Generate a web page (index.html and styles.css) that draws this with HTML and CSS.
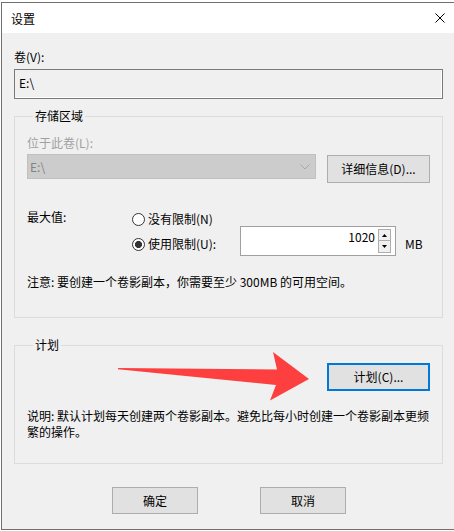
FILE: index.html
```html
<!DOCTYPE html>
<html lang="zh-CN">
<head>
<meta charset="utf-8">
<title>设置</title>
<link rel="stylesheet" href="styles.css">
</head>
<body>
<div class="window">
  <div class="titlebar">
    <span class="title">设置</span>
    <svg class="close" width="10" height="10" viewBox="0 0 10 10"><path d="M0.5 0.5 L9.5 9.5 M9.5 0.5 L0.5 9.5" stroke="#000" stroke-width="1" fill="none"/></svg>
  </div>
  <div class="content">
    <div class="label vol-label">卷(V):</div>
    <div class="textbox">E:\</div>

    <fieldset class="group storage">
      <legend>存储区域</legend>
      <div class="label disabled">位于此卷(L):</div>
      <div class="loc-row">
        <div class="combo">
          <span>E:\</span>
          <svg class="chevron" width="10" height="6" viewBox="0 0 10 6"><path d="M0.5 0.5 L5 5 L9.5 0.5" stroke="#a8a8a8" stroke-width="1" fill="none"/></svg>
        </div>
        <button class="btn details">详细信息(D)...</button>
      </div>
      <div class="limits">
        <div class="label max-label">最大值:</div>
        <div class="radio r1"><span class="circle"></span>没有限制(N)</div>
        <div class="radio r2"><span class="circle checked"></span>使用限制(U):</div>
        <div class="spin">
          <span class="spin-value">1020</span>
          <div class="spin-btns">
            <span class="spin-btn"><svg width="5" height="3" viewBox="0 0 5 3"><path d="M2.5 0 L5 3 L0 3 Z" fill="#000"/></svg></span>
            <span class="spin-btn"><svg width="5" height="3" viewBox="0 0 5 3"><path d="M0 0 L5 0 L2.5 3 Z" fill="#000"/></svg></span>
          </div>
        </div>
        <div class="label unit">MB</div>
      </div>
      <div class="label note">注意: 要创建一个卷影副本，你需要至少 300MB 的可用空间。</div>
    </fieldset>

    <fieldset class="group schedule">
      <legend>计划</legend>
      <div class="sched-row">
        <button class="btn focused">计划(C)...</button>
      </div>
      <div class="label desc">说明: 默认计划每天创建两个卷影副本。避免比每小时创建一个卷影副本更频<br>繁的操作。</div>
    </fieldset>

    <div class="actions">
      <button class="btn action">确定</button>
      <button class="btn action">取消</button>
    </div>

    <svg class="arrow" width="200" height="52" viewBox="116 350 200 52">
      <polygon points="118,368 277,369.5 273,352 309,379 270,400.5 276,385 118,369.2" fill="#fd3f3f"/>
    </svg>
  </div>
</div>
</body>
</html>
```

FILE: styles.css
```css
* {
  box-sizing: border-box;
}

html, body {
  margin: 0;
  padding: 0;
}

body {
  width: 454px;
  height: 531px;
  overflow: hidden;
  background: #ffffff;
  font-family: "Noto Sans CJK SC", "Noto Sans", sans-serif;
  font-size: 12px;
  line-height: 16px;
  color: #000;
}

.window {
  margin: 2px 0 0 1px;
  width: 453px;
  height: 528px;
  border: 1px solid #707070;
  border-right: none;
  display: flex;
  flex-direction: column;
  background: #f0f0f0;
}

.titlebar {
  height: 30px;
  flex: none;
  background: #ffffff;
  display: flex;
  align-items: center;
  justify-content: space-between;
  padding: 0 9px 0 9px;
}

.title {
  line-height: 30px;
  font-size: 12px;
  padding-top: 1px;
}

.close {
  display: block;
  margin-top: 0px;
}

.content {
  flex: 1;
  position: relative;
  padding: 0 0 0 12px;
}

.label {
  line-height: 16px;
  white-space: nowrap;
}

.vol-label {
  margin-top: 16px;
}

.textbox {
  margin-top: 4px;
  width: 429px;
  height: 30px;
  border: 1px solid #7a7a7a;
  background: #f0f0f0;
  padding: 5px 0 0 4px;
  box-shadow: inset -1px -1px 0 #ffffff;
}

.group {
  margin: 0;
  width: 429px;
  min-width: 0;
  border: 1px solid #dcdcdc;
  padding: 0 12px;
}

.group legend {
  padding: 0 2px;
  margin-left: 6px;
  line-height: 16px;
}

.storage {
  margin-top: 9px;
  padding-top: 11px;
  padding-bottom: 27px;
}

.disabled {
  color: #a0a0a0;
}

.loc-row {
  display: flex;
  align-items: flex-start;
  margin-top: 3px;
  gap: 11px;
}

.combo {
  width: 289px;
  height: 25px;
  background: #cccccc;
  border: 1px solid #c0c0c0;
  color: #838383;
  display: flex;
  align-items: center;
  justify-content: space-between;
  padding: 0 5px 0 2px;
}

.chevron {
  display: block;
}

.btn {
  font: inherit;
  color: #000;
  background: #e1e1e1;
  border: 1px solid #adadad;
  border-radius: 0;
  padding: 0;
  margin: 0;
  line-height: 16px;
}

.details {
  width: 103px;
  height: 28px;
  margin-top: 1px;
}

.limits {
  margin-top: 26px;
  display: grid;
  grid-template-columns: 105px 108px 156px auto;
  grid-template-rows: 17px 30px;
}

.max-label {
  grid-column: 1;
  grid-row: 1;
}

.radio {
  display: flex;
  align-items: center;
  white-space: nowrap;
  height: 16px;
}

.r1 {
  grid-column: 2;
  grid-row: 1;
  margin-top: 2px;
}

.r2 {
  grid-column: 2;
  grid-row: 2;
  margin-top: 10px;
}

.circle {
  width: 13px;
  height: 13px;
  border: 1px solid #333333;
  border-radius: 50%;
  background: #ffffff;
  margin-right: 3px;
  flex: none;
}

.circle.checked {
  background: radial-gradient(circle, #333333 0 3.3px, #ffffff 3.8px);
}

.spin {
  grid-column: 3;
  grid-row: 2;
  width: 156px;
  height: 30px;
  border: 1px solid #a0a0a0;
  background: #ffffff;
  display: flex;
  justify-content: flex-end;
  padding: 1px 4px 0 0;
}

.spin-value {
  line-height: 16px;
  margin-top: 1px;
  margin-right: 3px;
}

.spin-btns {
  display: flex;
  flex-direction: column;
  width: 13px;
  margin-top: 1px;
}

.spin-btn {
  height: 12px;
  border: 1px solid #adadad;
  background: #f0f0f0;
  display: flex;
  align-items: center;
  justify-content: center;
}

.spin-btn + .spin-btn {
  margin-top: 0;
  border-top: none;
  height: 12px;
}

.spin-btn svg {
  display: block;
}

.unit {
  grid-column: 4;
  grid-row: 2;
  margin-top: 10px;
  margin-left: 9px;
}

.note {
  margin-top: 18px;
}

.schedule {
  margin-top: 19px;
  padding-top: 10px;
  padding-bottom: 23px;
}

.sched-row {
  display: flex;
  justify-content: flex-end;
}

.focused {
  width: 103px;
  height: 28px;
  border: 2px solid #0078d7;
}

.desc {
  margin-top: 17px;
}

.actions {
  display: flex;
  gap: 62px;
  margin-top: 23px;
  padding-left: 98px;
}

.action {
  width: 86px;
  height: 27px;
}

.arrow {
  position: absolute;
  left: 114px;
  top: 317px;
}
```
